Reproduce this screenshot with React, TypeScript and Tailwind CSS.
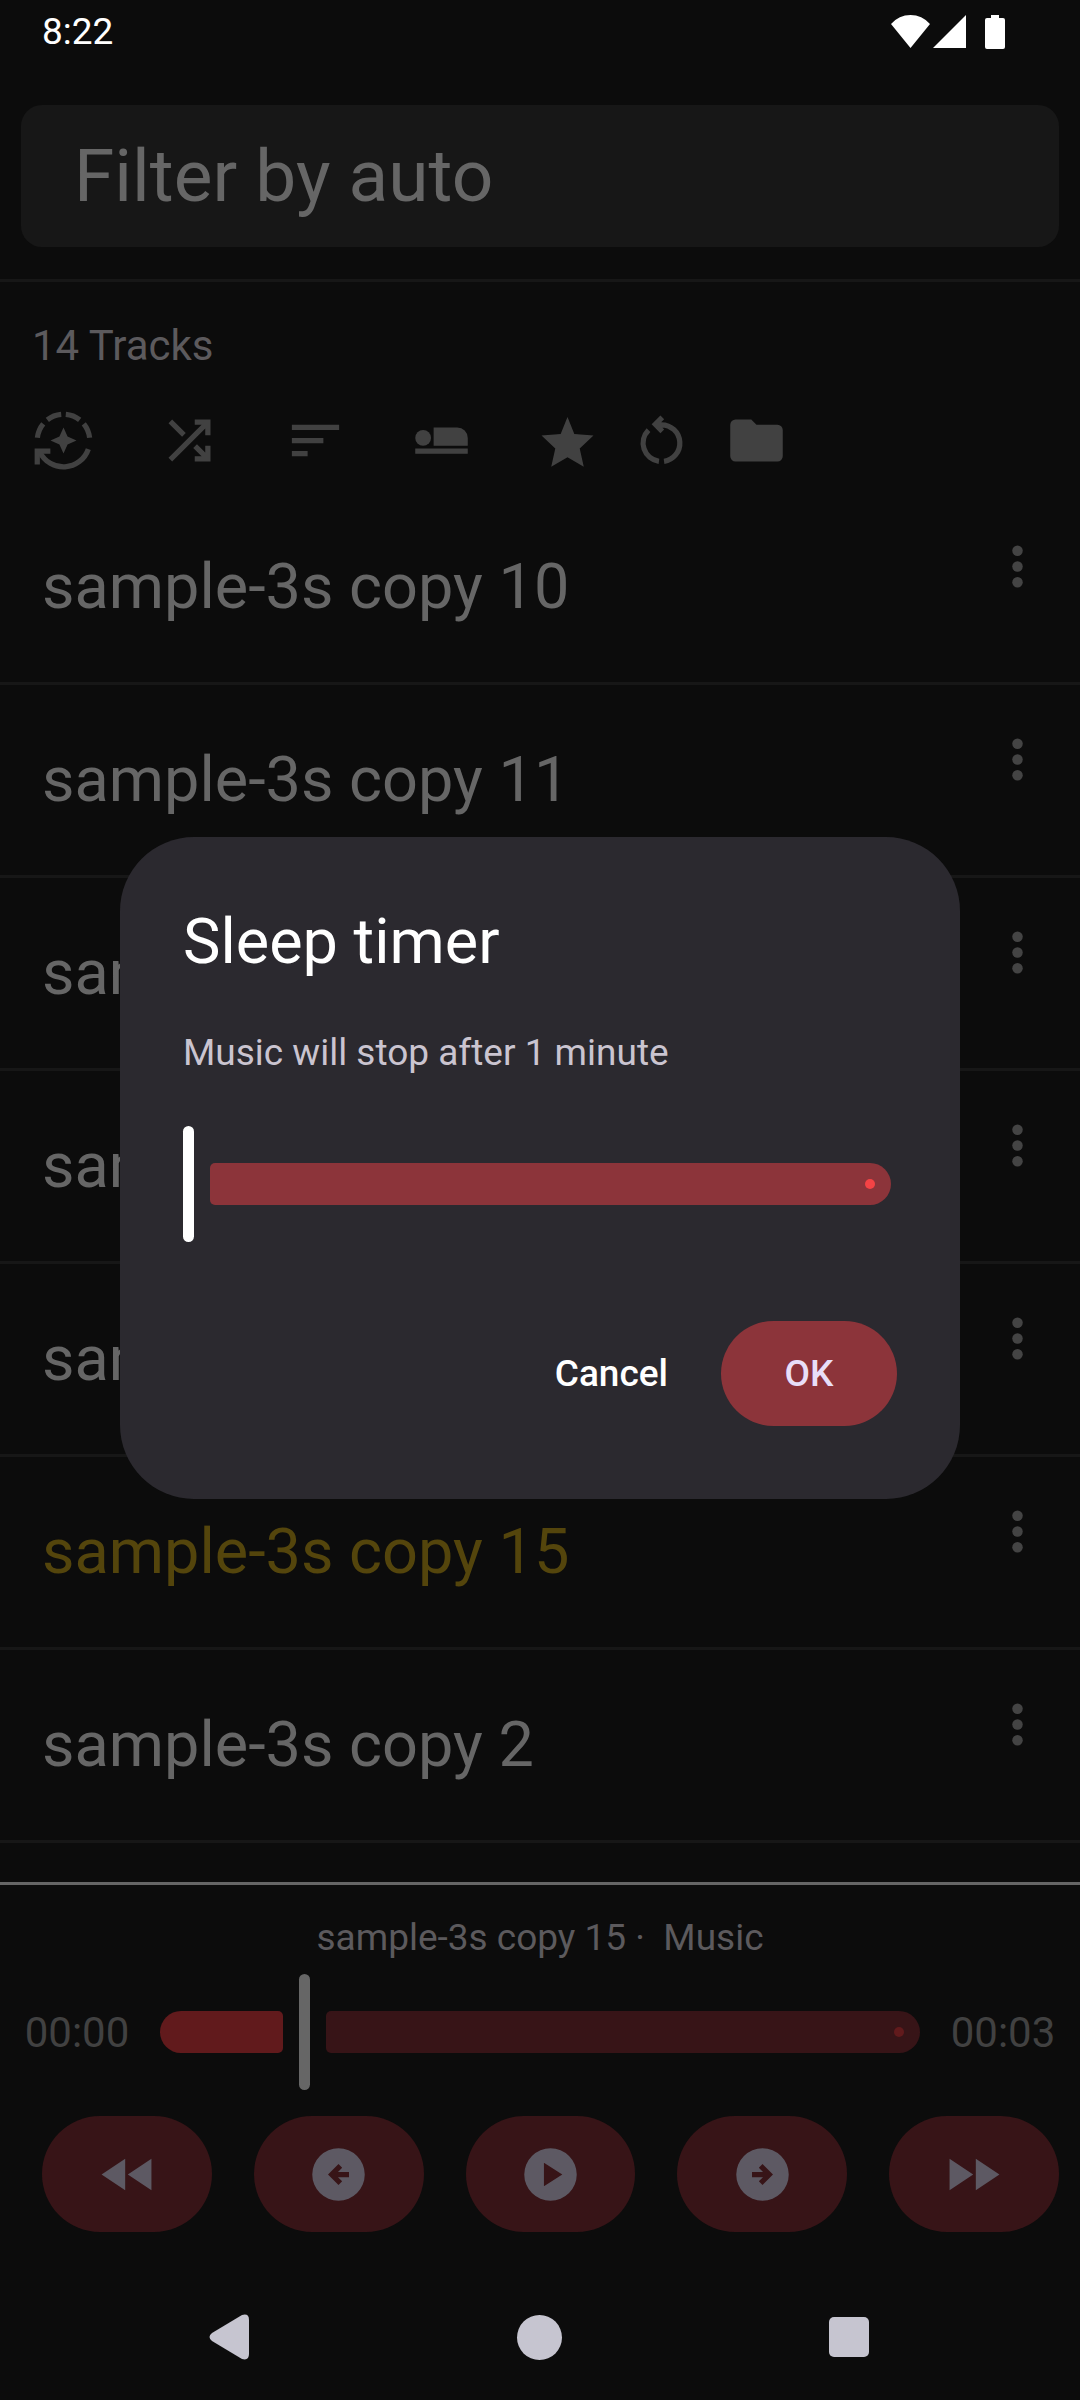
import { useState } from "react";
import type { ReactNode } from "react";

const TRACKS = [
  "sample-3s copy 10",
  "sample-3s copy 11",
  "sample-3s copy 12",
  "sample-3s copy 13",
  "sample-3s copy 14",
  "sample-3s copy 15",
  "sample-3s copy 2",
];

const CIRCLE = "M480-80a400 400 0 1 1 0-800 400 400 0 0 1 0 800Z";

function Symbol({ d }: { d: string }) {
  return (
    <svg viewBox="0 -960 960 960" className="size-[63px]" fill="currentColor" aria-hidden="true">
      <path d={d} fillRule="evenodd" />
    </svg>
  );
}

function Icon({ children }: { children: ReactNode }) {
  return (
    <svg viewBox="0 0 24 24" className="size-[63px]" fill="currentColor" aria-hidden="true">
      {children}
    </svg>
  );
}

const WIDE_TOOLS: { label: string; icon: ReactNode }[] = [
  {
    label: "Auto play",
    icon: (
      <Icon>
        <path
          d="M12.87 2.04A10 10 0 0 1 18.16 4.12M19.72 5.64A10 10 0 0 1 21.95 10.95M11.13 2.04A10 10 0 0 0 5.84 4.12M4.28 5.64A10 10 0 0 0 2.05 10.95M21.46 15.26A10 10 0 0 1 3 16.4"
          fill="none"
          stroke="currentColor"
          strokeWidth="2"
        />
        <path d="M1 15h6v2H3v4.1H1Z" />
        <path d="M12 7.05l1.55 3.4 3.4 1.55-3.4 1.55L12 16.95l-1.55-3.4L7.05 12l3.4-1.55Z" />
      </Icon>
    ),
  },
  {
    label: "Shuffle",
    icon: (
      <Symbol d="M560-160v-80h104L537-367l57-57 126 126v-102h80v240H560Zm-344 0-56-56 504-504H560v-80h240v240h-80v-104L216-160Zm151-377L160-744l56-56 207 207-56 56Z" />
    ),
  },
  {
    label: "Sort",
    icon: <Symbol d="M120-240v-80h240v80H120Zm0-200v-80h480v80H120Zm0-200v-80h720v80H120Z" />,
  },
  {
    label: "Sleep timer",
    icon: (
      <Icon>
        <circle cx="5" cy="11" r="3" />
        <path d="M9 7h9a4 4 0 0 1 4 4v3H9ZM2 15h20v2H2Z" />
      </Icon>
    ),
  },
  {
    label: "Favourites",
    icon: (
      <Icon>
        <path d="M12 3l2.6 6.5 7.3.6-5.25 4.9L18.2 22 12 18.4 5.8 22l1.55-7L2.1 10.1l7.3-.6Z" />
      </Icon>
    ),
  },
];

const NARROW_TOOLS: { label: string; icon: ReactNode }[] = [
  {
    label: "Repeat",
    icon: (
      <Icon>
        <path
          d="M12.97 19.93A7 7 0 0 0 12 6h-1.5M11.03 19.93A7 7 0 0 1 7.05 8.05M12.3 3.2 9.65 5.85 12.3 8.5"
          fill="none"
          stroke="currentColor"
          strokeWidth="2"
        />
      </Icon>
    ),
  },
  {
    label: "Folders",
    icon: (
      <Symbol d="M160-160q-33 0-56.5-23.5T80-240v-480q0-33 23.5-56.5T160-800h240l80 80h320q33 0 56.5 23.5T880-640v400q0 33-23.5 56.5T800-160H160Z" />
    ),
  },
];

const PLAYER_BUTTONS = [
  { label: "Rewind", d: "M860-240 500-480l360-240v480Zm-400 0L100-480l360-240v480Z" },
  { label: "Previous", d: CIRCLE + "M480-320l56-56-64-64h168v-80H472l64-64-56-56-160 160 160 160Z" },
  { label: "Play", d: CIRCLE + "M380-300l280-180-280-180v360Z" },
  { label: "Next", d: CIRCLE + "M480-320l160-160-160-160-56 56 64 64H320v80h168l-64 64 56 56Z" },
  { label: "Fast forward", d: "M100-240v-480l360 240-360 240Zm400 0v-480l360 240-360 240Z" },
];

type SliderProps = {
  label: string;
  value: number;
  max: number;
  onChange: (value: number) => void;
  thumb: string;
  active: string;
  inactive: string;
  dot: string;
};

function Slider({ label, value, max, onChange, thumb, active, inactive, dot }: SliderProps) {
  return (
    <div className="relative flex h-[116px] grow items-center gap-4">
      {value > 0 && (
        <div
          className={`h-[42px] basis-0 rounded-l-[21px] rounded-r-[5px] ${active}`}
          style={{ flexGrow: value }}
        />
      )}
      <div className={`h-full w-[11px] rounded-full ${thumb}`} />
      <div
        className={`flex h-[42px] basis-0 items-center justify-end rounded-l-[5px] rounded-r-[21px] ${inactive}`}
        style={{ flexGrow: max - value }}
      >
        <div className={`mr-4 size-[10px] rounded-full ${dot}`} />
      </div>
      <input
        type="range"
        aria-label={label}
        min={0}
        max={max}
        value={value}
        onChange={(e) => onChange(Number(e.target.value))}
        className="absolute inset-0 h-full w-full cursor-pointer opacity-0"
      />
    </div>
  );
}

function StatusBar() {
  return (
    <header className="flex h-[63px] items-center justify-between pr-[75px] pl-[42px] text-[37px] leading-[43px] text-white">
      <span>8:22</span>
      <svg viewBox="0 0 114 34" className="h-[34px] w-[114px]" fill="currentColor" aria-hidden="true">
        <path d="M0 9Q8 0 19.500 0T39 9L19.500 33ZM75 0v33H42ZM100 0h8v3h4q2 0 2 2v27q0 2-2 2h-16q-2 0-2-2V5q0-2 2-2h4Z" />
      </svg>
    </header>
  );
}

function TrackRow({ name, current }: { name: string; current: boolean }) {
  return (
    <li className="flex items-start justify-between border-b-3 border-[#171717] pr-[31px] pl-[42px]">
      <span
        className={`py-[53px] text-[63px] leading-[84px] ${current ? "text-[#54450c]" : "text-[#666666]"}`}
      >
        {name}
      </span>
      <button type="button" aria-label={`Options for ${name}`} className="mt-[43px] text-[#444444]">
        <Icon>
          <circle cx="12" cy="6" r="2" />
          <circle cx="12" cy="12" r="2" />
          <circle cx="12" cy="18" r="2" />
        </Icon>
      </button>
    </li>
  );
}

function Player() {
  const [position, setPosition] = useState(172);
  return (
    <section className="border-t-3 border-[#666666] pt-[26px] pb-[42px]">
      <p className="text-center text-[37px] leading-[53px] whitespace-pre text-[#5c5a5d]">
        {"sample-3s copy 15 ·  Music"}
      </p>
      <div className="mt-[10px] flex items-center gap-[27px] px-[21px] text-center text-[42px] leading-[63px] text-[#414141]">
        <span className="w-[112px]">00:00</span>
        <Slider
          label="Playback position"
          value={position}
          max={1000}
          onChange={setPosition}
          thumb="bg-[#666666]"
          active="bg-[#611a1c]"
          inactive="bg-[#371417]"
          dot="bg-[#611a1c]"
        />
        <span className="w-[112px]">00:03</span>
      </div>
      <div className="mt-[26px] flex gap-[42px] pr-[21px] pl-[42px]">
        {PLAYER_BUTTONS.map((b) => (
          <button
            key={b.label}
            type="button"
            aria-label={b.label}
            className="flex h-[116px] flex-1 items-center justify-center rounded-full bg-[#371417] text-[#5d5963]"
          >
            <Symbol d={b.d} />
          </button>
        ))}
      </div>
    </section>
  );
}

function SleepTimerDialog() {
  const [minutes, setMinutes] = useState(0);
  return (
    <div className="fixed inset-x-0 top-[63px] bottom-[127px] flex items-center justify-center px-[120px]">
      <div
        role="dialog"
        aria-labelledby="sleep-title"
        className="w-full max-w-[840px] rounded-[74px] bg-[#2b292f] px-[63px] pt-[63px] pb-[73px]"
      >
        <h2 id="sleep-title" className="text-[63px] leading-[84px] text-white">
          Sleep timer
        </h2>
        <p className="mt-[42px] text-[37px] leading-[53px] text-[#cac4d0]">
          {`Music will stop after ${minutes + 1} minute${minutes > 0 ? "s" : ""}`}
        </p>
        <div className="mt-[47px] flex pr-[6px]">
          <Slider
            label="Minutes"
            value={minutes}
            max={59}
            onChange={setMinutes}
            thumb="bg-white"
            active="bg-[#f44345]"
            inactive="bg-[#8c343a]"
            dot="bg-[#f44345]"
          />
        </div>
        <div className="mt-[79px] flex justify-end gap-[21px] text-[37px] leading-[53px] font-medium">
          <button type="button" className="h-[105px] rounded-full px-[32px] text-white">
            Cancel
          </button>
          <button type="button" className="h-[105px] w-[176px] rounded-full bg-[#8c343a] text-[#e8def8]">
            OK
          </button>
        </div>
      </div>
    </div>
  );
}

function NavBar() {
  return (
    <nav className="grid h-[126px] grid-cols-3 pr-[76px] pl-[74px] text-[#c6c5d0]">
      <button type="button" aria-label="Back" className="flex items-center justify-center">
        <svg viewBox="0 0 40 46" className="h-[46px] w-[40px]" fill="currentColor" aria-hidden="true">
          <path d="M33 1Q40-1 40 6v34q0 7-7 5L3 27q-5-4 0-8Z" />
        </svg>
      </button>
      <button type="button" aria-label="Home" className="flex items-center justify-center">
        <span className="size-[45px] rounded-full bg-current" />
      </button>
      <button type="button" aria-label="Recent apps" className="flex items-center justify-center">
        <span className="size-[40px] rounded-[5px] bg-current" />
      </button>
    </nav>
  );
}

export default function App() {
  return (
    <div className="flex min-h-screen flex-col bg-[#0c0c0c] font-['Roboto',sans-serif]">
      <StatusBar />
      <div className="mt-[42px] border-b-3 border-[#171717] px-[21px] pb-[32px]">
        <input
          type="text"
          aria-label="Filter tracks"
          placeholder="Filter by auto"
          className="block h-[142px] w-full rounded-[21px] bg-[#171717] px-[53px] text-[73px] text-[#666666] placeholder:text-[#666666]"
        />
      </div>
      <main className="flex grow flex-col">
        <p className="px-[32px] pt-[32px] text-[42px] leading-[63px] text-[#5c5a5d]">14 Tracks</p>
        <div className="mt-[32px] mb-[20px] flex text-[#414141]">
          {WIDE_TOOLS.map((t) => (
            <button key={t.label} type="button" aria-label={t.label} className="flex w-[126px] justify-center">
              {t.icon}
            </button>
          ))}
          <div className="flex gap-[32px]">
            {NARROW_TOOLS.map((t) => (
              <button key={t.label} type="button" aria-label={t.label}>
                {t.icon}
              </button>
            ))}
          </div>
        </div>
        <ul>
          {TRACKS.map((name) => (
            <TrackRow key={name} name={name} current={name === "sample-3s copy 15"} />
          ))}
        </ul>
      </main>
      <Player />
      <NavBar />
      <SleepTimerDialog />
    </div>
  );
}
